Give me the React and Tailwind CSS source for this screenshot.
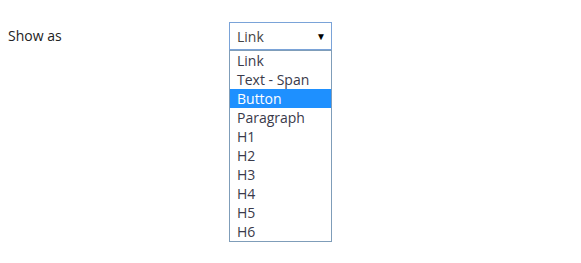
import React from "react";

const options = ["Link", "Text - Span", "Button", "Paragraph", "H1", "H2", "H3", "H4", "H5", "H6"];

export default function App() {
  return (
    <div className="w-[581px] h-[263px] bg-white text-[#333] font-['Open_Sans',sans-serif] text-[13px]">
      <div className="flex items-start pt-[22px] pl-[8px]">
        <div className="w-[221px] pt-[4px] leading-[20px] text-[14px] text-[#222]">Show as</div>
        <div className="relative w-[103px]">
          <div className="h-[28px] border border-[#7aa3d8] flex items-center justify-between pl-[7px] pr-[5px]">
            <span className="leading-[18px] text-[14px] text-[#444] pt-[2px]">Link</span>
            <span className="text-[10px] text-black">▼</span>
          </div>
          <ul className="absolute left-0 top-[28px] w-[103px] border border-[#7f9db9] bg-white">
            {options.map((o) => (
              <li
                key={o}
                className={
                  o === "Button"
                    ? "h-[19px] leading-[19px] pl-[7px] text-[14px] bg-[#1e90ff] text-white"
                    : "h-[19px] leading-[19px] pl-[7px] text-[14px] text-[#3a3a4a]"
                }
              >
                {o}
              </li>
            ))}
          </ul>
        </div>
      </div>
    </div>
  );
}
